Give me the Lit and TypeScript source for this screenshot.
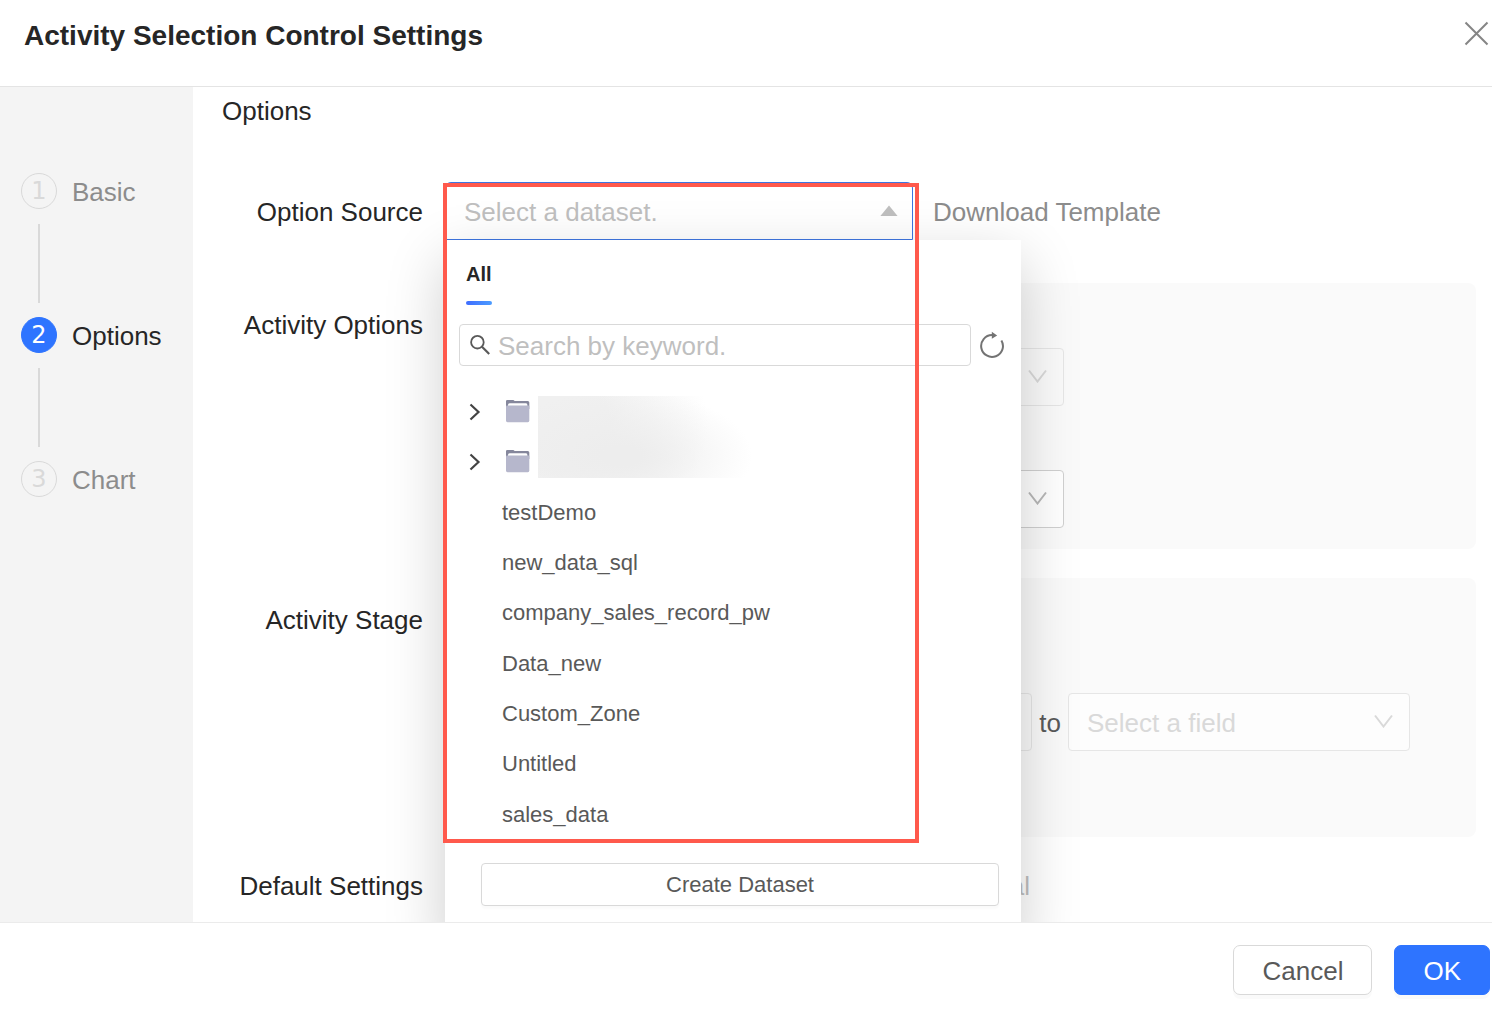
import { LitElement, html, css, svg } from "lit";
import { customElement, property } from "lit/decorators.js";

const steps = ["Basic", "Options", "Chart"];
const currentStep = 1;

const datasets = [
  "testDemo",
  "new_data_sql",
  "company_sales_record_pw",
  "Data_new",
  "Custom_Zone",
  "Untitled",
  "sales_data",
];

const chevronDown = svg`<path d="M1 1.5 L9.5 12.5 L18 1.5" fill="none" stroke="currentColor" stroke-width="2"/>`;

@customElement("field-select")
export class FieldSelect extends LitElement {
  @property() label = "";
  @property() placeholder = "Select a field";
  @property({ type: Boolean }) disabled = false;
  @property() tone = "muted";

  static styles = css`
    :host {
      display: block;
      position: relative;
      height: 58px;
    }
    .box {
      box-sizing: border-box;
      width: 100%;
      height: 100%;
      margin: 0;
      padding: 2px 48px 0 18px;
      appearance: none;
      border: 1px solid #e6e6e6;
      border-radius: 4px;
      background: #fafafa;
      color: #d9d9d9;
      font: inherit;
      opacity: 1;
    }
    .box.light {
      background: #fdfdfd;
    }
    .box.active {
      background: #fff;
      border-color: #d0d0d0;
      color: #bfbfbf;
    }
    .arrow {
      position: absolute;
      top: 21px;
      right: 17px;
      width: 19px;
      height: 14px;
      color: #d9d9d9;
      pointer-events: none;
    }
    .arrow.active {
      color: #b8b8b8;
    }
  `;

  render() {
    return html`
      <select class="box ${this.tone}" aria-label=${this.label} ?disabled=${this.disabled}>
        <option>${this.placeholder}</option>
      </select>
      <svg class="arrow ${this.tone}" viewBox="0 0 19 14" aria-hidden="true">${chevronDown}</svg>
    `;
  }
}

@customElement("dataset-picker")
export class DatasetPicker extends LitElement {
  static styles = css`
    :host {
      display: block;
      box-sizing: border-box;
      padding: 18px 14px 36px;
      background: #fff;
      box-shadow: 0 20px 56px rgba(0, 0, 0, 0.2);
      font-size: 22px;
      color: #595959;
    }
    .tabs {
      display: flex;
      padding: 0 7px;
    }
    .tab {
      display: flex;
      flex-direction: column;
      padding: 0;
      border: 0;
      background: none;
      font: inherit;
      font-size: 20px;
      font-weight: bold;
      line-height: 32px;
      color: #262626;
    }
    .tab::after {
      content: "";
      height: 4px;
      margin-top: 11px;
      border-radius: 2px;
      background: linear-gradient(90deg, #3f6dff, #4b9cff);
    }
    .tools {
      display: flex;
      align-items: center;
      gap: 8px;
      margin-top: 19px;
    }
    .search {
      box-sizing: border-box;
      flex: none;
      display: flex;
      align-items: center;
      gap: 7px;
      width: 512px;
      height: 42px;
      padding: 0 10px;
      border: 1px solid #d9d9d9;
      border-radius: 4px;
    }
    .search svg {
      flex: none;
      width: 21px;
      height: 21px;
    }
    .query {
      flex: 1;
      min-width: 0;
      padding: 2px 0 0;
      border: 0;
      outline: 0;
      background: none;
      font: inherit;
      font-size: 26px;
      color: #262626;
    }
    .query::placeholder {
      color: #bfbfbf;
      opacity: 1;
    }
    .refresh,
    .expand {
      flex: none;
      display: flex;
      padding: 0;
      border: 0;
      background: none;
    }
    .list {
      position: relative;
      display: grid;
      grid-auto-rows: 1fr;
      height: 453px;
      margin: 21px 0 23px;
      padding: 0 0 0 10px;
      list-style: none;
    }
    .folder {
      display: flex;
      align-items: center;
      gap: 25px;
    }
    .leaf {
      display: flex;
      align-items: center;
      padding-left: 33px;
    }
    .veil {
      position: absolute;
      top: 9px;
      left: 79px;
      width: 220px;
      height: 82px;
      background:
        radial-gradient(ellipse 130px 66px at 84px 60px, #ededed 15%, rgba(237, 237, 237, 0) 100%),
        radial-gradient(ellipse 150px 130px at 20px 30px, #f0f0f0 35%, rgba(240, 240, 240, 0) 100%);
    }
    .create {
      box-sizing: border-box;
      display: block;
      width: 518px;
      height: 43px;
      margin-left: 22px;
      padding: 0;
      border: 1px solid #d9d9d9;
      border-radius: 4px;
      background: #fff;
      box-shadow: 0 3px 2px rgba(0, 0, 0, 0.02);
      font: inherit;
      color: #595959;
    }
  `;

  private folder(n: number) {
    return html`
      <li class="folder">
        <button class="expand" aria-label="Expand folder ${n}">
          <svg width="12" height="18" viewBox="0 0 12 18">
            <path d="M1.5 1.5 L9.5 9 L1.5 16.5" fill="none" stroke="#434343" stroke-width="2.2" />
          </svg>
        </button>
        <svg width="24" height="24" viewBox="0 0 24 24" aria-hidden="true">
          <path d="M0 9 V1.2 Q0 0 1.2 0 H7 Q8 0 8.6 1 H21.8 Q23.3 1 23.3 2.5 V9 Z" fill="#85879c" />
          <path d="M2 5 Q2 3.2 3.6 3.2 H20 Q21.4 3.2 21.4 5 V8 H2 Z" fill="#fff" />
          <path d="M0 6.4 Q0 5.4 1 5.4 H22.3 Q23.3 5.4 23.3 6.4 V20.6 Q23.3 22.2 21.8 22.2 H1.5 Q0 22.2 0 20.6 Z" fill="#b6b7cc" />
        </svg>
      </li>
    `;
  }

  render() {
    return html`
      <div class="tabs" role="tablist">
        <button class="tab" role="tab" aria-selected="true">All</button>
      </div>
      <div class="tools">
        <label class="search">
          <svg viewBox="0 0 21 21" aria-hidden="true">
            <circle cx="7.4" cy="7.2" r="6.3" fill="none" stroke="#595959" stroke-width="1.8" />
            <path d="M12 11.8 L19.2 19" fill="none" stroke="#595959" stroke-width="2.2" />
          </svg>
          <input class="query" type="text" aria-label="Search" placeholder="Search by keyword." />
        </label>
        <button class="refresh" aria-label="Refresh">
          <svg width="26" height="28" viewBox="0 0 26 28">
            <path d="M22.4 9.4 A10.9 10.9 0 1 1 13 4.1" fill="none" stroke="#737373" stroke-width="2" />
            <path d="M12.8 .8 L18.2 4.4 L12.8 7.8 Z" fill="#737373" />
          </svg>
        </button>
      </div>
      <ul class="list">
        ${[1, 2].map((n) => this.folder(n))}
        ${datasets.map((name) => html`<li class="leaf">${name}</li>`)}
        <li class="veil" aria-hidden="true"></li>
      </ul>
      <button class="create">Create Dataset</button>
    `;
  }
}

@customElement("app-root")
export class AppRoot extends LitElement {
  static styles = css`
    :host {
      display: flex;
      flex-direction: column;
      height: 100vh;
      overflow: hidden;
      background: #fff;
      color: #262626;
      font-family: "Liberation Sans", Arial, sans-serif;
      font-size: 26px;
      line-height: 32px;
    }
    .header {
      flex: none;
      display: flex;
      align-items: flex-start;
      justify-content: space-between;
      padding: 20px 3px 34px 24px;
      border-bottom: 1px solid #e4e4e4;
    }
    .title {
      margin: 0;
      font-size: 28px;
      font-weight: bold;
      line-height: 32px;
    }
    .close {
      display: flex;
      padding: 1px 0 0;
      border: 0;
      background: none;
    }
    .body {
      flex: 1;
      display: flex;
      min-height: 0;
      overflow: hidden;
    }
    .sidebar {
      box-sizing: border-box;
      flex: none;
      width: 193px;
      padding: 86px 16px 0 21px;
      background: #f4f4f4;
    }
    .steps {
      margin: 0;
      padding: 0;
      list-style: none;
    }
    .step {
      display: grid;
      grid-template-columns: 36px 1fr;
      column-gap: 15px;
      align-items: center;
      color: #8c8c8c;
    }
    .step.current {
      color: #262626;
    }
    .step:not(:last-child)::after {
      content: "";
      width: 2px;
      height: 79px;
      margin: 15px 0 14px 17px;
      background: #d9d9d9;
    }
    .name {
      padding-top: 2px;
    }
    .badge {
      box-sizing: border-box;
      display: flex;
      align-items: center;
      justify-content: center;
      width: 36px;
      height: 36px;
      border: 1px solid #d9d9d9;
      border-radius: 50%;
      color: #d9d9d9;
      font-family: "DejaVu Sans", sans-serif;
      font-size: 24px;
    }
    .current .badge {
      border-color: #2e74ff;
      background: #2e74ff;
      color: #fff;
    }
    .content {
      flex: 1;
      min-width: 0;
      padding: 8px 16px 0 29px;
    }
    .section {
      margin: 0 0 55px;
      font-size: 26px;
      font-weight: normal;
      line-height: 32px;
    }
    .row {
      display: grid;
      grid-template-columns: 201px 1fr;
      column-gap: 22px;
      align-items: start;
    }
    .row.center {
      align-items: center;
    }
    .label {
      text-align: right;
    }
    .center .label,
    .link {
      padding-top: 2px;
    }
    .label.inset {
      padding-top: 26px;
    }
    .source {
      display: flex;
      align-items: center;
      gap: 20px;
    }
    .picker {
      position: relative;
      flex: none;
      width: 468px;
      height: 58px;
    }
    .dataset {
      box-sizing: border-box;
      width: 100%;
      height: 100%;
      margin: 0;
      padding: 2px 48px 0 18px;
      appearance: none;
      border: 1px solid #3d75e0;
      border-radius: 6px 6px 0 0;
      background: #fff;
      color: #bfbfbf;
      font: inherit;
    }
    .up {
      position: absolute;
      top: 23px;
      right: 15px;
      pointer-events: none;
    }
    .popup {
      position: absolute;
      z-index: 1;
      top: 58px;
      left: 0;
      width: 576px;
    }
    .highlight {
      position: absolute;
      z-index: 2;
      box-sizing: border-box;
      top: 1px;
      left: -2px;
      width: 476px;
      height: 660px;
      border: 4px solid #ff594c;
      pointer-events: none;
    }
    .link {
      color: #8c8c8c;
      text-decoration: none;
    }
    .activity {
      margin-top: 43px;
    }
    .stages {
      margin-top: 29px;
    }
    .panel {
      box-sizing: border-box;
      border-radius: 8px;
      background: #fafafa;
    }
    .options {
      display: grid;
      grid-template-columns: 583px;
      row-gap: 64px;
      padding: 65px 36px 21px;
    }
    .stage {
      display: flex;
      align-items: center;
      justify-content: flex-end;
      gap: 7px;
      padding: 115px 66px 86px 36px;
      color: #595959;
    }
    .to {
      padding-top: 2px;
    }
    .range {
      width: 342px;
    }
    .defaults {
      margin-top: 33px;
    }
    .mode {
      display: flex;
      align-items: center;
      gap: 12px;
      width: 585px;
      justify-content: flex-end;
      color: #bfbfbf;
    }
    .footer {
      flex: none;
      display: flex;
      justify-content: flex-end;
      gap: 22px;
      padding: 22px 2px 27px;
      border-top: 1px solid #ebebeb;
    }
    .button {
      box-sizing: border-box;
      height: 50px;
      padding: 2px 28px 0;
      border: 1px solid #d9d9d9;
      border-radius: 7px;
      background: #fff;
      box-shadow: 0 4px 0 rgba(0, 0, 0, 0.02);
      color: #595959;
      font: inherit;
    }
    .button.primary {
      border-color: #2e74ff;
      background: #2e74ff;
      color: #fff;
    }
  `;

  render() {
    return html`
      <header class="header">
        <h1 class="title">Activity Selection Control Settings</h1>
        <button class="close" aria-label="Close">
          <svg width="25" height="25" viewBox="0 0 25 25">
            <path d="M1.5 1.5 L23.5 23.5 M23.5 1.5 L1.5 23.5" fill="none" stroke="#858585" stroke-width="2" />
          </svg>
        </button>
      </header>
      <div class="body">
        <nav class="sidebar" aria-label="Steps">
          <ol class="steps">
            ${steps.map(
              (name, i) => html`
                <li class="step ${i === currentStep ? "current" : ""}">
                  <span class="badge">${i + 1}</span>
                  <span class="name">${name}</span>
                </li>
              `,
            )}
          </ol>
        </nav>
        <main class="content">
          <h2 class="section">Options</h2>
          <div class="row center">
            <label class="label" for="dataset">Option Source</label>
            <div class="source">
              <div class="picker">
                <select class="dataset" id="dataset">
                  <option>Select a dataset.</option>
                </select>
                <svg class="up" width="18" height="12" viewBox="0 0 18 12" aria-hidden="true">
                  <path d="M9 .6 L17.6 11 H.4 Z" fill="#bfbfbf" />
                </svg>
                <dataset-picker class="popup"></dataset-picker>
                <div class="highlight"></div>
              </div>
              <a class="link" href="#">Download Template</a>
            </div>
          </div>
          <div class="row activity">
            <span class="label inset">Activity Options</span>
            <div class="panel options">
              <field-select label="Activity ID" disabled></field-select>
              <field-select label="Activity name" tone="active"></field-select>
            </div>
          </div>
          <div class="row stages">
            <span class="label inset">Activity Stage</span>
            <div class="panel stage">
              <field-select class="range" label="Start" disabled></field-select>
              <span class="to">to</span>
              <field-select class="range" label="End" tone="light" disabled></field-select>
            </div>
          </div>
          <div class="row defaults">
            <span class="label">Default Settings</span>
            <label class="mode"><input type="radio" name="mode" />Manual</label>
          </div>
        </main>
      </div>
      <footer class="footer">
        <button class="button">Cancel</button>
        <button class="button primary">OK</button>
      </footer>
    `;
  }
}
